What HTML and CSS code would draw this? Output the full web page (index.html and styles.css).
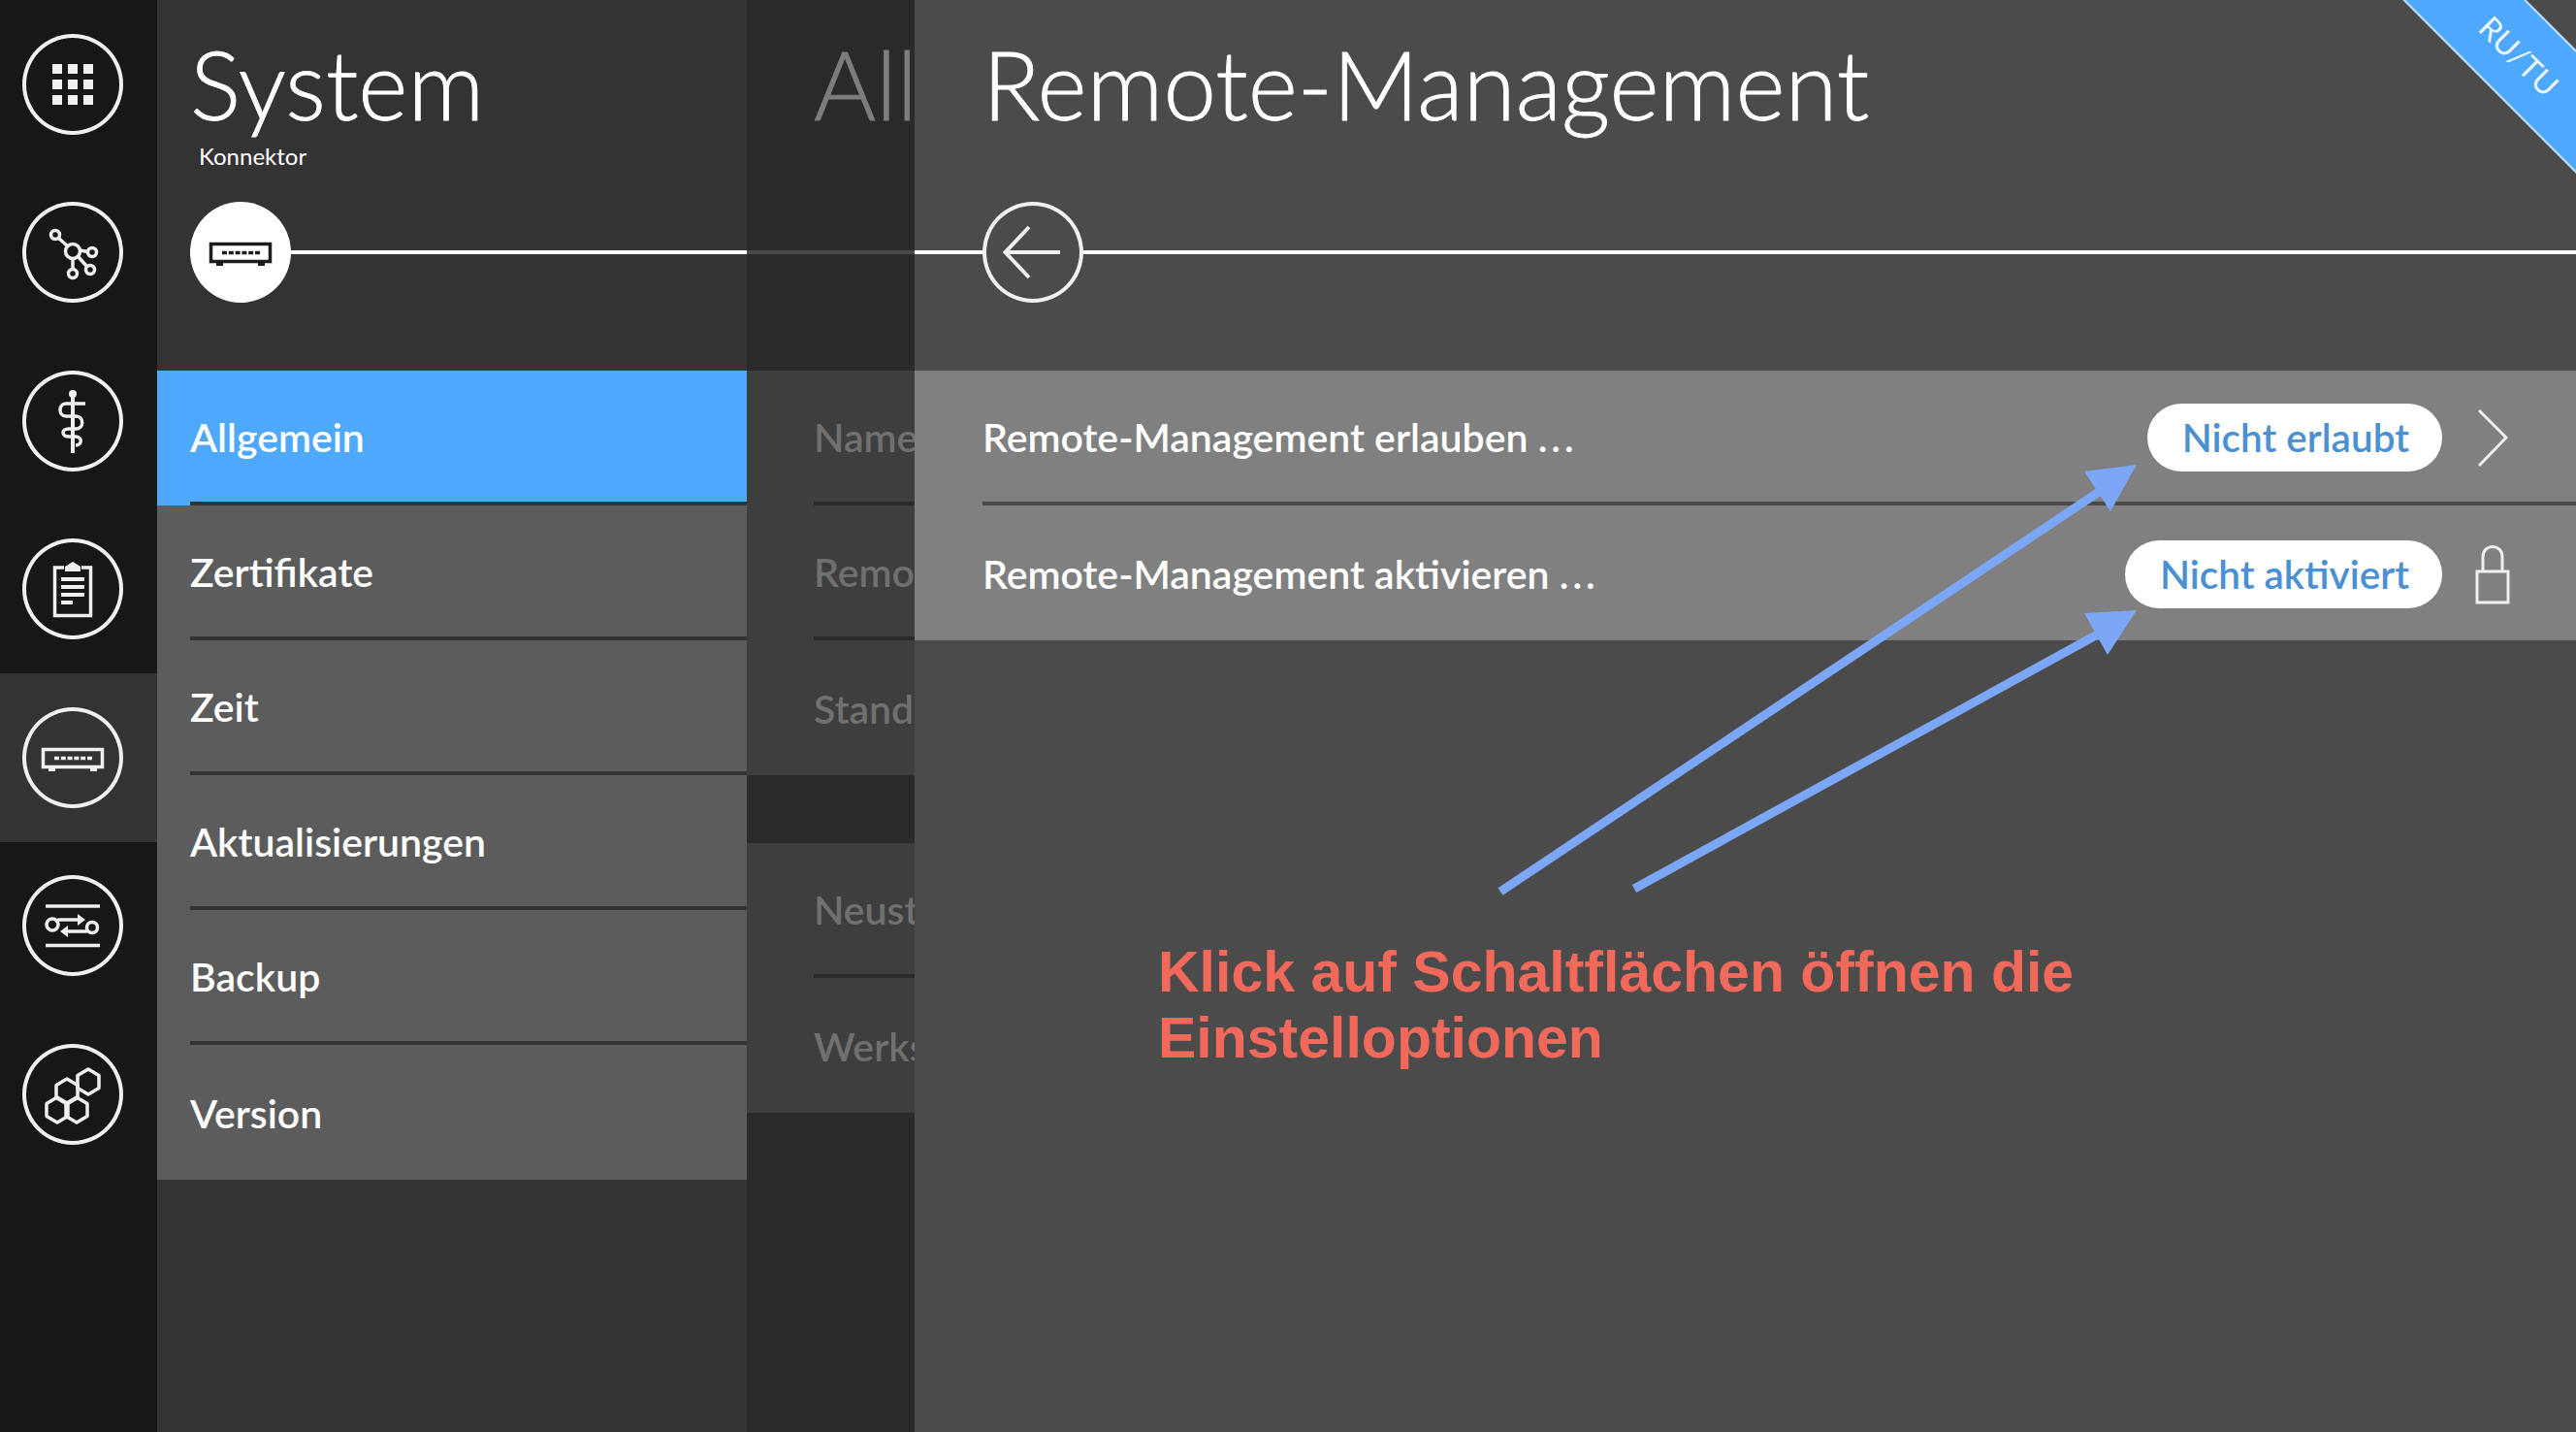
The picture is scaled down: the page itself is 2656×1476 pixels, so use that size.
FILE: index.html
```html
<!DOCTYPE html>
<html lang="de">

<head>
    <meta charset="UTF-8">
    <title>Remote-Management</title>
    <link rel="stylesheet" href="styles.css">
</head>

<body>
    <svg class="icon-defs" width="0" height="0">
        <symbol id="i-grid" viewBox="0 0 104 104">
            <g fill="currentColor">
                <rect x="31" y="31" width="10" height="10" />
                <rect x="47" y="31" width="10" height="10" />
                <rect x="63" y="31" width="10" height="10" />
                <rect x="31" y="47" width="10" height="10" />
                <rect x="47" y="47" width="10" height="10" />
                <rect x="63" y="47" width="10" height="10" />
                <rect x="31" y="63" width="10" height="10" />
                <rect x="47" y="63" width="10" height="10" />
                <rect x="63" y="63" width="10" height="10" />
            </g>
        </symbol>
        <symbol id="i-network" viewBox="0 0 104 104">
            <g fill="none" stroke="currentColor" stroke-width="3.5">
                <circle cx="34" cy="34" r="4.5" />
                <circle cx="52" cy="51" r="7.5" />
                <circle cx="72" cy="52" r="4.5" />
                <circle cx="70" cy="70" r="4.5" />
                <circle cx="52" cy="74" r="4.5" />
                <path d="M37 37 47 46M59.500 50 67.500 51.500M57 56 67 67M52 58.500V69.500" />
            </g>
        </symbol>
        <symbol id="i-staff" viewBox="0 0 104 104">
            <circle cx="52" cy="24" r="4" fill="currentColor" />
            <path d="M52 24V85" fill="none" stroke="currentColor" stroke-width="4" />
            <path d="M65 34H45C37 34 37 47 45 47H55C64 47 64 60 55 60H48C40 60 40 68 48 68H55C62 68 62 77 55 77" fill="none" stroke="currentColor" stroke-width="3.500" />
        </symbol>
        <symbol id="i-clipboard" viewBox="0 0 104 104">
            <path d="M43 30H33.500V79.500H70.500V30H61" fill="none" stroke="currentColor" stroke-width="3.500" />
            <path d="M44 34V29L52 24 60 29V34Z" fill="currentColor" />
            <path d="M40 42H64M40 50H64M40 58H64M40 66H52" fill="none" stroke="currentColor" stroke-width="4" />
        </symbol>
        <symbol id="i-router" viewBox="0 0 104 104">
            <rect x="21.500" y="43.500" width="61" height="18" fill="none" stroke="currentColor" stroke-width="3.500" />
            <path d="M33 52.500H72" fill="none" stroke="currentColor" stroke-width="3.500" stroke-dasharray="5 1.800" />
            <path d="M27 63H34V66H27ZM70 63H77V66H70Z" fill="currentColor" />
        </symbol>
        <symbol id="i-transfer" viewBox="0 0 104 104">
            <g fill="none" stroke="currentColor" stroke-width="3.500">
                <path d="M24 32H80M24 72.500H80" />
                <circle cx="31" cy="51" r="6" />
                <circle cx="72" cy="54" r="5.500" />
                <path d="M36 46.500C37 46 38 46 39 46H60M67 58H45" />
            </g>
            <path d="M57 40 65 46 57 52ZM47 52 39 58 47 64Z" fill="currentColor" />
        </symbol>
        <symbol id="i-hex" viewBox="0 0 104 104">
            <g fill="none" stroke="currentColor" stroke-width="3.500" stroke-linejoin="round">
                <path d="M68 26 79 32.500V45.500L68 52 57 45.500V32.500Z" />
                <path d="M46 36 57 42.500V55.500L46 62 35 55.500V42.500Z" />
                <path d="M36 55 47 61.500V74.500L36 81 25 74.500V61.500Z" />
                <path d="M56 55 67 61.500V74.500L56 81 45 74.500V61.500Z" />
            </g>
        </symbol>
    </svg>

    <div class="app">
        <nav class="rail">
            <div class="rail-item"><svg class="ring"><use href="#i-grid" /></svg></div>
            <div class="rail-item"><svg class="ring"><use href="#i-network" /></svg></div>
            <div class="rail-item"><svg class="ring"><use href="#i-staff" /></svg></div>
            <div class="rail-item"><svg class="ring"><use href="#i-clipboard" /></svg></div>
            <div class="rail-item active"><svg class="ring"><use href="#i-router" /></svg></div>
            <div class="rail-item"><svg class="ring"><use href="#i-transfer" /></svg></div>
            <div class="rail-item"><svg class="ring"><use href="#i-hex" /></svg></div>
        </nav>

        <section class="panel panel-system">
            <header class="panel-head">
                <div class="title-block">
                    <h1 class="title">System</h1>
                    <p class="subtitle">Konnektor</p>
                </div>
                <div class="head-line">
                    <svg class="ring ring-solid"><use href="#i-router" /></svg>
                    <span class="line"></span>
                </div>
            </header>
            <ul class="menu">
                <li class="menu-item selected"><span>Allgemein</span></li>
                <li class="menu-item"><span>Zertifikate</span></li>
                <li class="menu-item"><span>Zeit</span></li>
                <li class="menu-item"><span>Aktualisierungen</span></li>
                <li class="menu-item"><span>Backup</span></li>
                <li class="menu-item"><span>Version</span></li>
            </ul>
        </section>

        <section class="panel panel-general">
            <header class="panel-head">
                <div class="title-block">
                    <h1 class="title">Allgemein</h1>
                </div>
                <div class="head-line"><span class="line"></span></div>
            </header>
            <ul class="menu">
                <li class="menu-item"><span>Name</span></li>
                <li class="menu-item"><span>Remote-Management</span></li>
                <li class="menu-item"><span>Standort</span></li>
            </ul>
            <ul class="menu menu-second">
                <li class="menu-item"><span>Neustart</span></li>
                <li class="menu-item"><span>Werkseinstellungen</span></li>
            </ul>
        </section>

        <main class="panel panel-main">
            <header class="panel-head">
                <div class="title-block">
                    <h1 class="title">Remote-Management</h1>
                </div>
                <div class="head-line">
                    <span class="line line-lead"></span>
                    <svg class="ring" viewBox="0 0 104 104">
                        <path d="M48 26 23.500 52 48 78M24 52H80" fill="none" stroke="currentColor" stroke-width="4" />
                    </svg>
                    <span class="line"></span>
                </div>
            </header>

            <ul class="settings">
                <li class="setting">
                    <span class="setting-label">Remote-Management erlauben <span class="dots">...</span></span>
                    <button class="pill">Nicht erlaubt</button>
                    <svg class="setting-icon" viewBox="0 0 40 62">
                        <path d="M6 3 34 31 6 60" fill="none" stroke="currentColor" stroke-width="3" />
                    </svg>
                </li>
                <li class="setting">
                    <span class="setting-label">Remote-Management aktivieren <span class="dots">...</span></span>
                    <button class="pill">Nicht aktiviert</button>
                    <svg class="setting-icon" viewBox="0 0 40 62">
                        <path d="M4 28H36V60H4ZM10 28V13C10 -1 30 -1 30 13V28" fill="none" stroke="currentColor" stroke-width="3" />
                    </svg>
                </li>
            </ul>

            <p class="note">Klick auf Schaltflächen öffnen die<br>Einstelloptionen</p>

            <div class="ribbon">RU/TU</div>
        </main>
    </div>

    <!-- annotation arrows drawn on top of the screenshot -->
    <svg class="arrows" viewBox="0 0 2656 1476">
        <path d="M1547 919 2170 503" />
        <path d="M1685 916 2168 651" />
        <polygon points="2203,479 2149,486 2176,527" />
        <polygon points="2203,629 2149,632 2173,675" />
    </svg>
</body>

</html>
```

FILE: styles.css
```css
* {
    margin: 0;
    padding: 0;
    box-sizing: border-box;
}

body {
    width: 2656px;
    height: 1476px;
    overflow: hidden;
    position: relative;
    font-family: "Lato", "Liberation Sans", sans-serif;
    background: #171717;
}

ul {
    list-style: none;
}

.icon-defs {
    position: absolute;
}

.app {
    display: grid;
    grid-template-columns: 162px 608px 173px 1fr;
    height: 100%;
}

/* left icon rail */
.rail {
    background: #171717;
    display: flex;
    flex-direction: column;
}

.rail-item {
    height: 173.5px;
    padding-right: 12px;
    display: flex;
    align-items: center;
    justify-content: center;
}

.rail-item.active {
    background: #333333;
}

.ring {
    width: 104px;
    height: 104px;
    flex: none;
    border-radius: 50%;
    box-shadow: inset 0 0 0 4px #f0f0f0;
    color: #f0f0f0;
}

.ring-solid {
    background: #ffffff;
    box-shadow: none;
    color: #1c1c1c;
}

/* panels */
.panel {
    position: relative;
    overflow: hidden;
}

.panel-system {
    background: #333333;
}

.panel-general {
    background: #2a2a2a;
}

.panel-main {
    background: #4b4b4b;
}

.panel-head {
    height: 382px;
    display: flex;
    flex-direction: column;
}

.title-block {
    height: 208px;
    padding-top: 26px;
    white-space: nowrap;
}

.title {
    font-size: 98px;
    font-weight: 300;
    line-height: 120px;
    color: #ffffff;
    -webkit-text-stroke: 0.8px currentColor;
}

.subtitle {
    font-size: 24px;
    line-height: 26px;
    margin-top: 2px;
    padding-left: 9px;
    color: #ffffff;
}

.head-line {
    height: 104px;
    display: flex;
    align-items: center;
}

.line {
    flex: 1;
    height: 4px;
    background: #ffffff;
}

.line-lead {
    flex: none;
    width: 70px;
}

.panel-system .panel-head {
    padding-left: 34px;
}

.panel-general .panel-head {
    padding-left: 69px;
}

.panel-general .head-line {
    margin-left: -69px;
}

.panel-main .panel-head {
    padding-left: 0;
}

.panel-main .title-block {
    padding-left: 70px;
}

.panel-general .title {
    color: #7d7d7d;
}

.panel-general .line {
    background: #484848;
}

/* menu rows */
.menu-item {
    height: 139px;
    padding-left: 34px;
    background: #5c5c5c;
    font-size: 41px;
    font-weight: 600;
    color: #ffffff;
    white-space: nowrap;
}

.menu-item span {
    display: flex;
    align-items: center;
    height: 100%;
    padding-top: 2px;
    border-bottom: 4px solid #333333;
}

.menu-item:last-child span {
    border-bottom: none;
}

.menu-item.selected {
    background: #4ea8fb;
}

.panel-general .menu-item {
    padding-left: 69px;
    background: #3e3e3e;
    color: #707070;
}

.panel-general .menu-item span {
    border-bottom-color: #2a2a2a;
}

.menu-second {
    margin-top: 70px;
}

/* main settings */
.settings {
    background: #808080;
}

.setting {
    height: 139px;
    margin-left: 70px;
    padding-top: 2px;
    display: flex;
    align-items: center;
    border-bottom: 4px solid #4b4b4b;
    color: #ffffff;
}

.setting:last-child {
    border-bottom: none;
}

.setting-label {
    flex: 1;
    font-size: 41px;
    font-weight: 600;
}

.dots {
    letter-spacing: 4px;
}

.pill {
    height: 70px;
    padding: 0 34px 0 36px;
    border: none;
    border-radius: 35px;
    background: #ffffff;
    font-family: inherit;
    font-size: 40.500px;
    font-weight: 600;
    color: #4a90d2;
}

.setting-icon {
    width: 40px;
    height: 62px;
    margin: 0 66px 0 32px;
    color: #f0f0f0;
}

.note {
    margin: 308px 0 0 251px;
    font-family: "Liberation Sans", Arial, sans-serif;
    font-size: 59px;
    font-weight: 700;
    line-height: 68px;
    color: #f0695a;
}

/* corner ribbon, lies over the panel */
.ribbon {
    position: absolute;
    top: 12px;
    right: -142px;
    width: 400px;
    height: 90px;
    transform: rotate(45deg);
    background: #4ea8fb;
    border-top: 2px solid #bfe0fb;
    border-bottom: 2px solid #bfe0fb;
    display: flex;
    align-items: center;
    justify-content: center;
    font-size: 32px;
    color: #eaf5ff;
}

/* annotation layer */
.arrows {
    position: absolute;
    top: 0;
    left: 0;
    width: 2656px;
    height: 1476px;
    pointer-events: none;
}

.arrows path {
    fill: none;
    stroke: #7ca6f6;
    stroke-width: 9;
}

.arrows polygon {
    fill: #7ca6f6;
}
```
